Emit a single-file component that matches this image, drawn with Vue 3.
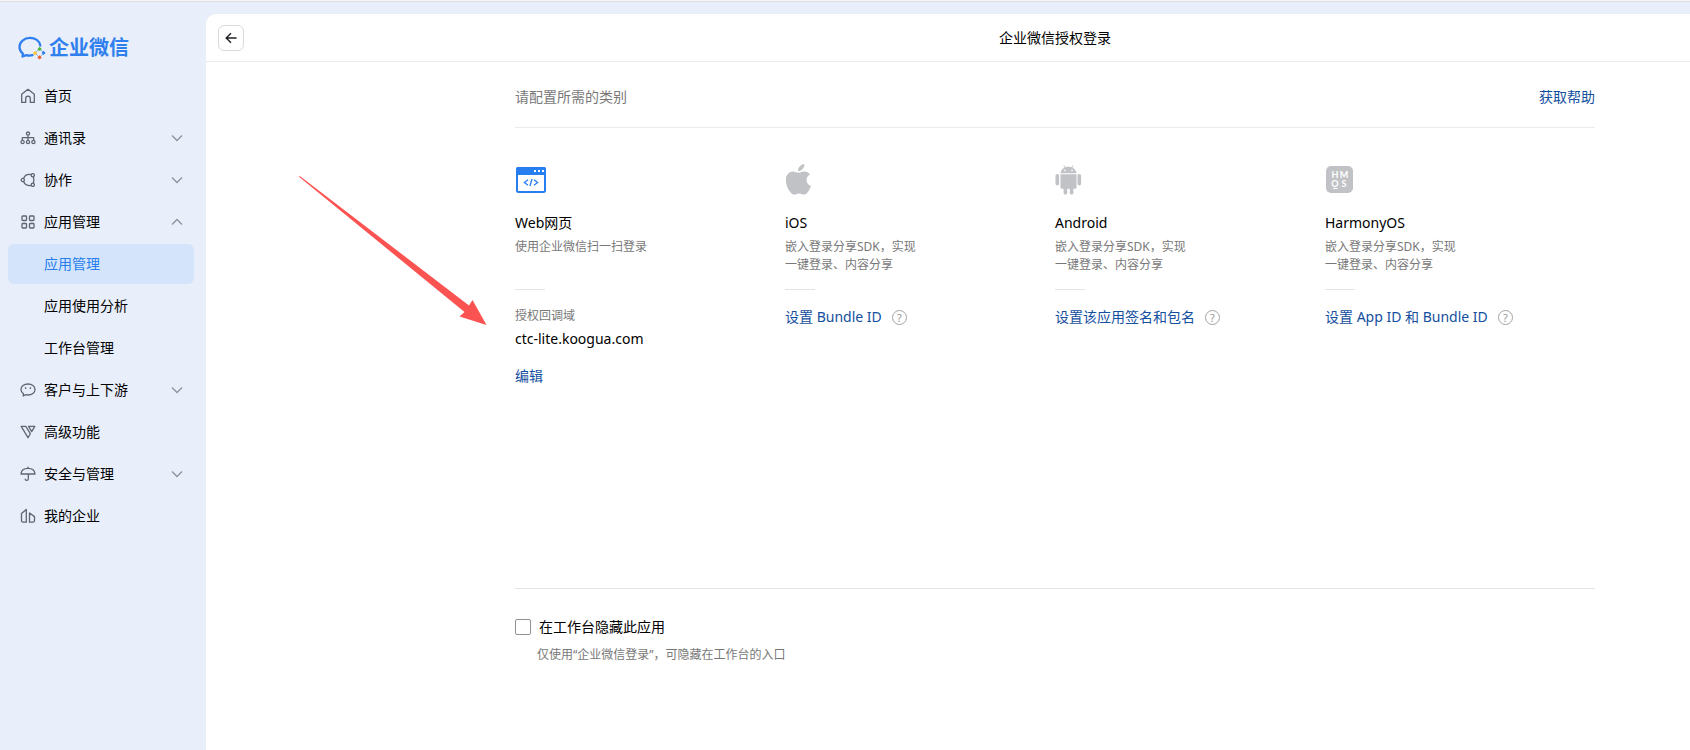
<template>
  <div class="page">
    <aside class="sidebar">
      <a href="#" class="logo">
        <svg class="logo-mark" viewBox="0 0 28 24" aria-hidden="true">
          <path
            d="M22.300 9.500C21.400 5 17.300 1.900 12 1.900 6.100 1.900 1.500 5.900 1.500 11c0 2.700 1.300 5.100 3.400 6.700L4.500 20.500l3.700-1.400c2.100.6 4.100.6 6.300.1"
            fill="none"
            stroke="#2f80ee"
            stroke-width="2.300"
            stroke-linejoin="round"
            stroke-linecap="round"
          />
          <path d="M21.500 13l4.500 4-4.500 4.500-4.500-4.500z" fill="none" stroke="#7fa6dc" stroke-width=".8" />
          <path d="M21.500 10.800l2.300 2.200-2.100 2-2.300-1.800z" fill="#4fb833" />
          <path d="M25.300 14.800l2.400 2.200-2.400 2-1.600-2z" fill="#2f80ee" />
          <path d="M17 15l2.200 2-2 2.200-2.400-1.900z" fill="#fbc52d" />
          <path d="M21.600 19.200l2.100 2.200-1.900 2.100-2.600-1.900z" fill="#f4622c" />
        </svg>
        <span>企业微信</span>
      </a>

      <nav class="menu">
        <a
          v-for="item in menu"
          :key="item.key"
          href="#"
          class="menu-item"
          :class="{ active: item.key === activeKey }"
          @click.prevent="activeKey = item.key"
        >
          <svg class="menu-icon" viewBox="0 0 16 16" aria-hidden="true">
            <path v-for="d in icons[item.icon] || []" :key="d" :d="d" />
          </svg>
          <span class="menu-label">{{ item.label }}</span>
          <svg v-if="item.arrow" class="menu-arrow" viewBox="0 0 12 8" aria-hidden="true">
            <path :d="item.arrow === 'up' ? 'M1 6.500l5-5 5 5' : 'M1 1.500l5 5 5-5'" />
          </svg>
        </a>
      </nav>
    </aside>

    <main class="panel">
      <header class="panel-header">
        <button type="button" class="back-btn" aria-label="返回">
          <svg viewBox="0 0 12 12" aria-hidden="true">
            <path d="M11.500 6H1.200M6 1.200L1.200 6 6 10.800" />
          </svg>
        </button>
        <h1 class="panel-title">企业微信授权登录</h1>
      </header>

      <div class="content">
        <div class="content-head">
          <span>请配置所需的类别</span>
          <a href="#" class="link">获取帮助</a>
        </div>

        <section class="platforms">
          <div v-for="p in platforms" :key="p.name" class="platform">
            <svg v-if="p.icon === 'web'" class="platform-icon" viewBox="0 0 32 32" aria-hidden="true">
              <rect x="2" y="4" width="28" height="24" rx="1.500" fill="#fff" stroke="#267ef0" stroke-width="2" />
              <path d="M1 11V5a2 2 0 012-2h26a2 2 0 012 2v6z" fill="#267ef0" />
              <path d="M19 6h2v2h-2zM23 6h2v2h-2zM27 6h2v2h-2z" fill="#fff" />
              <path
                d="M13 15.800l-3.600 2.700 3.600 2.700M19 15.800l3.600 2.700-3.600 2.700M17 15l-2 7"
                fill="none"
                stroke="#267ef0"
                stroke-width="1.300"
              />
            </svg>
            <svg v-else-if="p.icon === 'apple'" class="platform-icon" viewBox="0 0 32 32" aria-hidden="true">
              <path
                d="M19.300 0c.2 1.900-.5 3.600-1.600 4.900-1.100 1.300-2.900 2.300-4.700 2.200-.2-1.800.6-3.600 1.700-4.700C15.800 1 17.800.1 19.300 0z"
                fill="#c0c2c6"
              />
              <path
                d="M24.900 10.400c-2 1.200-3.300 3-3.300 5.500 0 2.900 1.600 5 4.400 6.100-.6 1.900-1.600 3.700-2.800 5.400-1.200 1.600-2.400 3.200-4.300 3.200s-2.500-1.100-4.800-1.100-3 1.100-4.900 1.200c-1.900 0-3.300-1.800-4.500-3.400C2.200 23.800.3 18.300 1.100 13.700 1.800 10 4.600 7.600 7.900 7.500c2 0 3.900 1.300 5.200 1.300 1.300 0 3.600-1.600 6.100-1.400 2.500.1 4.500 1.200 5.700 3z"
                fill="#c0c2c6"
              />
            </svg>
            <svg v-else-if="p.icon === 'android'" class="platform-icon" viewBox="0 0 32 32" aria-hidden="true">
              <g fill="#c0c2c6">
                <path d="M5.500 9.300C5.800 6.400 7.500 4.600 9.700 3.500L8.300 1.700l.7-.5 1.600 2c1.600-.5 4-.5 5.700 0l1.600-2 .7.5-1.400 1.800c2.200 1.100 4 2.900 4.300 5.800z" />
                <path d="M5.500 10.300h16v13a1.500 1.500 0 01-1.500 1.500H7a1.500 1.500 0 01-1.500-1.500z" />
                <rect x="0.500" y="10" width="3.600" height="11.500" rx="1.800" />
                <rect x="22.500" y="10" width="3.600" height="11.500" rx="1.800" />
                <rect x="8.600" y="22" width="3.600" height="8.500" rx="1.600" />
                <rect x="14.800" y="22" width="3.600" height="8.500" rx="1.600" />
              </g>
              <circle cx="10" cy="6.400" r=".8" fill="#fff" />
              <circle cx="17" cy="6.400" r=".8" fill="#fff" />
            </svg>
            <svg v-else class="platform-icon" viewBox="0 0 32 32" aria-hidden="true">
              <rect x="1" y="2" width="27" height="27" rx="5" fill="#c0c2c6" />
              <g class="hmos">
                <text x="10" y="14">H</text>
                <text x="19" y="14">M</text>
                <text x="10" y="23">O</text>
                <text x="19" y="23">S</text>
              </g>
              <path d="M8 24.500h4.500" stroke="#fff" stroke-width="1" />
            </svg>

            <h2 class="platform-name">{{ p.name }}</h2>
            <p class="platform-desc">{{ p.desc }}</p>

            <div class="platform-config">
              <template v-if="p.domain">
                <div class="domain-label">授权回调域</div>
                <div class="domain-value">{{ p.domain }}</div>
                <a href="#" class="link edit-link">编辑</a>
              </template>
              <div v-else class="setting">
                <a href="#" class="link">{{ p.action }}</a>
                <button type="button" class="help-btn" aria-label="帮助">?</button>
              </div>
            </div>
          </div>
        </section>

        <section class="visibility">
          <label class="checkbox">
            <input v-model="hidden" type="checkbox" />
            <span>在工作台隐藏此应用</span>
          </label>
          <p class="visibility-hint">仅使用“企业微信登录”，可隐藏在工作台的入口</p>
        </section>
      </div>

      <!-- pointer to the callback domain -->
      <svg class="pointer" viewBox="0 0 188 149" aria-hidden="true">
        <path d="M0 .8L.8 0l169.200 129.500 3.500-5.500L187.500 149l-27-8.500 5-4.500z" fill="#fb5352" />
      </svg>
    </main>
  </div>
</template>

<script setup>
import { ref } from 'vue'

const activeKey = ref('app-list')
const hidden = ref(false)

const menu = [
  { key: 'home', label: '首页', icon: 'home' },
  { key: 'contacts', label: '通讯录', icon: 'contacts', arrow: 'down' },
  { key: 'collab', label: '协作', icon: 'collab', arrow: 'down' },
  { key: 'apps', label: '应用管理', icon: 'apps', arrow: 'up' },
  { key: 'app-list', label: '应用管理' },
  { key: 'app-usage', label: '应用使用分析' },
  { key: 'workbench', label: '工作台管理' },
  { key: 'customer', label: '客户与上下游', icon: 'chat', arrow: 'down' },
  { key: 'advanced', label: '高级功能', icon: 'advanced' },
  { key: 'security', label: '安全与管理', icon: 'umbrella', arrow: 'down' },
  { key: 'company', label: '我的企业', icon: 'company' }
]

const icons = {
  home: ['M5.700 14.400H1.700V6.300L8 1.300l6.300 5v8.100h-4V10.500a2.300 2.300 0 00-4.600 0z'],
  contacts: [
    'M6.400 3.600a1.600 1.600 0 103.200 0 1.600 1.600 0 10-3.200 0z',
    'M8 5.200v5M2.300 10.300V7.700h11.400v2.600',
    'M1 12a1.600 1.600 0 103.200 0A1.600 1.600 0 101 12z',
    'M6.400 12a1.600 1.600 0 103.200 0 1.600 1.600 0 10-3.200 0z',
    'M11.800 12a1.600 1.600 0 103.200 0 1.600 1.600 0 10-3.200 0z'
  ],
  collab: [
    'M1.200 8a1.600 1.600 0 103.200 0 1.600 1.600 0 10-3.200 0z',
    'M11.200 3.200a1.600 1.600 0 103.200 0 1.600 1.600 0 10-3.200 0z',
    'M11.200 12.800a1.600 1.600 0 103.200 0 1.600 1.600 0 10-3.200 0z',
    'M3.600 6.400C4.700 3.600 7.500 1.900 11.200 2.700M3.600 9.600c1.100 2.800 3.900 4.500 7.600 3.700M13.400 4.800c.6 2.100.6 4.300 0 6.400'
  ],
  apps: [
    'M2.800 2h2.900a.8.8 0 01.8.8v2.900a.8.8 0 01-.8.8H2.800a.8.8 0 01-.8-.8V2.800a.8.8 0 01.8-.8z',
    'M10.300 2h2.900a.8.8 0 01.8.8v2.900a.8.8 0 01-.8.8h-2.900a.8.8 0 01-.8-.8V2.800a.8.8 0 01.8-.8z',
    'M2.800 9.500h2.900a.8.8 0 01.8.8v2.900a.8.8 0 01-.8.8H2.800a.8.8 0 01-.8-.8v-2.900a.8.8 0 01.8-.8z',
    'M10.300 9.500h2.900a.8.8 0 01.8.8v2.900a.8.8 0 01-.8.8h-2.900a.8.8 0 01-.8-.8v-2.900a.8.8 0 01.8-.8z'
  ],
  chat: [
    'M3.200 14l.2-2.200C2 10.700 1 9.200 1 7.500 1 4.300 4.100 2 8 2s7 2.300 7 5.500S11.900 13 8 13c-.8 0-1.600-.1-2.300-.3z',
    'M5.600 5.300v1.600M10.400 5.300v1.600'
  ],
  advanced: ['M1.200 2.300h4.600l4.500 7.400L8 13.700z', 'M8.600 2.300h6.200l-3.100 5.300z'],
  umbrella: ['M1 8C1.300 4.400 4.200 2.300 8 2.300S14.700 4.400 15 8z', 'M8 .8v1.500M8.300 8v4.800a1.600 1.600 0 01-3.200 0'],
  company: ['M1.500 12.500V5.600L6.300 1.500v12.700H3a1.500 1.500 0 01-1.500-1.700z', 'M9.500 14.200V5l5 3.600v4a1.600 1.600 0 01-1.600 1.600z']
}

const platforms = [
  { icon: 'web', name: 'Web网页', desc: '使用企业微信扫一扫登录', domain: 'ctc-lite.koogua.com' },
  { icon: 'apple', name: 'iOS', desc: '嵌入登录分享SDK，实现一键登录、内容分享', action: '设置 Bundle ID' },
  { icon: 'android', name: 'Android', desc: '嵌入登录分享SDK，实现一键登录、内容分享', action: '设置该应用签名和包名' },
  { icon: 'harmony', name: 'HarmonyOS', desc: '嵌入登录分享SDK，实现一键登录、内容分享', action: '设置 App ID 和 Bundle ID' }
]
</script>

<style>
body {
  margin: 0;
  background: #f7f7f7;
}
</style>

<style scoped>
.page {
  display: flex;
  box-sizing: border-box;
  min-height: calc(100vh - 1px);
  margin-top: 1px;
  border-top: 1px solid #dcdee3;
  background: #e8eefa;
  color: #000;
  font-family: 'Noto Sans', 'Noto Sans CJK SC', sans-serif;
  font-size: 14px;
  line-height: 22px;
}

h1,
h2,
p {
  margin: 0;
  font-weight: 400;
}

a {
  text-decoration: none;
}

button {
  padding: 0;
  background: none;
  font-family: inherit;
  cursor: pointer;
}

.sidebar {
  flex: none;
  box-sizing: border-box;
  width: 206px;
  padding: 31px 12px 0 8px;
}

.logo {
  display: flex;
  align-items: center;
  gap: 3px;
  height: 30px;
  padding-left: 10px;
  margin-bottom: 13px;
  color: #2f80ee;
  font-size: 20px;
  font-weight: 700;
}

.logo-mark {
  width: 28px;
  height: 24px;
}

.menu {
  display: flex;
  flex-direction: column;
  gap: 2px;
}

.menu-item {
  display: flex;
  align-items: center;
  height: 40px;
  padding: 0 11px 0 12px;
  border-radius: 6px;
  color: #000;
}

.menu-item.active {
  background: #d4e4fa;
  color: #267ef0;
}

.menu-icon {
  width: 16px;
  height: 16px;
  margin-right: 8px;
  fill: none;
  stroke: #5f6672;
  stroke-width: 1.3;
  stroke-linejoin: round;
}

.menu-label {
  flex: 1;
}

.menu-arrow {
  width: 12px;
  height: 8px;
  fill: none;
  stroke: #8d939e;
  stroke-width: 1.3;
}

.panel {
  position: relative;
  flex: 1;
  min-width: 0;
  margin-top: 12px;
  border-radius: 10px 0 0 0;
  background: #fff;
}

.panel-header {
  display: flex;
  align-items: center;
  height: 47px;
  padding-left: 12px;
  border-bottom: 1px solid #ebebec;
}

.back-btn {
  display: flex;
  align-items: center;
  justify-content: center;
  box-sizing: border-box;
  width: 26px;
  height: 26px;
  border: 1px solid #d9dadd;
  border-radius: 6px;
}

.back-btn svg {
  width: 12px;
  height: 12px;
  fill: none;
  stroke: #1d1f23;
  stroke-width: 1.4;
}

.panel-title {
  flex: 1;
  padding-left: 176px;
  font-size: 14px;
  text-align: center;
}

.content {
  max-width: 1080px;
  padding-left: 214px;
  margin: 0 auto;
}

.content-head {
  display: flex;
  justify-content: space-between;
  padding: 24px 0 19px;
  border-bottom: 1px solid #ebebec;
  color: #787878;
}

.link {
  color: #134f9e;
}

.platforms {
  display: grid;
  grid-template-columns: repeat(4, 1fr);
  min-height: 424px;
  padding-top: 36px;
  border-bottom: 1px solid #e3e3e5;
}

.platform-icon {
  display: block;
  width: 32px;
  height: 32px;
}

.hmos {
  fill: #fff;
  font-family: Lato, sans-serif;
  font-size: 9px;
  font-weight: 700;
  text-anchor: middle;
}

.platform-name {
  margin-top: 16px;
  font-size: 14px;
}

.platform-desc {
  max-width: 136px;
  min-height: 36px;
  margin-top: 4px;
  color: #787878;
  font-size: 12px;
  line-height: 18px;
}

.platform-config::before {
  content: '';
  display: block;
  width: 30px;
  height: 1px;
  margin: 15px 0 16px;
  background: #e3e3e5;
}

.domain-label {
  color: #787878;
  font-size: 12px;
  line-height: 20px;
}

.domain-value {
  margin: 2px 0 15px;
}

.edit-link {
  display: block;
}

.setting {
  display: flex;
  align-items: center;
  gap: 10px;
}

.help-btn {
  box-sizing: border-box;
  width: 15px;
  height: 15px;
  border: 1px solid #a3a3a3;
  border-radius: 50%;
  color: #969696;
  font-size: 11px;
  line-height: 13px;
}

.visibility {
  padding: 27px 0 32px;
}

.checkbox {
  display: flex;
  align-items: center;
  gap: 8px;
}

.checkbox input {
  appearance: none;
  box-sizing: border-box;
  width: 16px;
  height: 16px;
  margin: 0;
  border: 1px solid #8f9195;
  border-radius: 2px;
}

.checkbox input:checked {
  border-color: #267ef0;
  background: #267ef0;
}

.visibility-hint {
  margin-top: 8px;
  padding-left: 22px;
  color: #787878;
  font-size: 12px;
  line-height: 18px;
}

.pointer {
  position: absolute;
  top: 162px;
  left: 93px;
  width: 188px;
  height: 149px;
  pointer-events: none;
}
</style>
